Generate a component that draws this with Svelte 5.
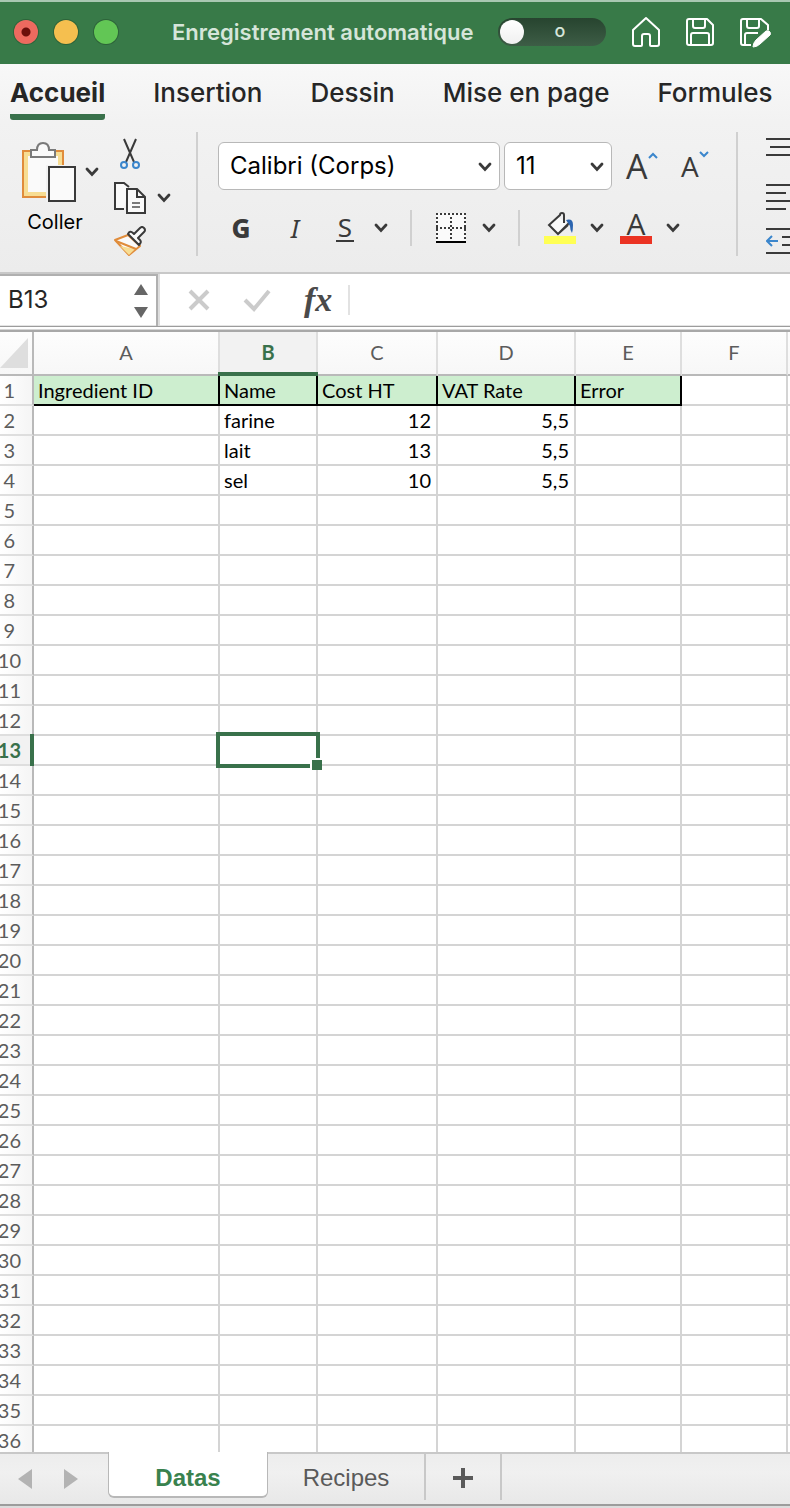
<script>
  const columns = [
    { name: 'A', width: 186 },
    { name: 'B', width: 98 },
    { name: 'C', width: 120 },
    { name: 'D', width: 138 },
    { name: 'E', width: 106 },
    { name: 'F', width: 106 },
    { name: '', width: null }
  ]

  const data = [
    ['Ingredient ID', 'Name', 'Cost HT', 'VAT Rate', 'Error'],
    ['', 'farine', '12', '5,5', ''],
    ['', 'lait', '13', '5,5', ''],
    ['', 'sel', '10', '5,5', '']
  ]

  const rows = Array.from({ length: 36 }, (_, i) => i + 1)
  const ribbonTabs = ['Accueil', 'Insertion', 'Dessin', 'Mise en page', 'Formules']
  const sheets = ['Datas', 'Recipes']

  let autosave = $state(false)
  let ribbonTab = $state('Accueil')
  let sheet = $state('Datas')
  let selRow = $state(13)
  let selCol = $state(1)
  let cellName = $derived(columns[selCol].name + selRow)

  function select(r, c) {
    if (!columns[c].name) return
    selRow = r
    selCol = c
  }

  function move(d) {
    selRow = Math.min(rows.length, Math.max(1, selRow + d))
  }

  function cell(r, c) {
    return data[r - 1]?.[c] ?? ''
  }
</script>

{#snippet chevron()}
  <svg class="chevron" width="14" height="10" viewBox="0 0 14 10" aria-hidden="true">
    <path d="M2 2l5 5.4L12 2" fill="none" stroke="currentColor" stroke-width="2.8" stroke-linecap="round" />
  </svg>
{/snippet}

<div class="window">
  <header class="titlebar">
    <div class="lights">
      <button class="light red" aria-label="Fermer"></button>
      <button class="light yellow" aria-label="Réduire"></button>
      <button class="light green" aria-label="Agrandir"></button>
    </div>
    <label class="autosave">
      <span>Enregistrement automatique</span>
      <span class="switch">
        <input type="checkbox" role="switch" bind:checked={autosave} />
        <span class="off">o</span>
      </span>
    </label>
    <div class="quick">
      <button aria-label="Accueil">
        <svg width="30" height="32" viewBox="0 0 30 32" fill="none" stroke="#fff" stroke-width="2" stroke-linejoin="round">
          <path d="M15 2L2 14v14q0 2 2 2h6q1 0 1-1v-9q0-2 2-2h4q2 0 2 2v9q0 1 1 1h6q2 0 2-2V14z" />
        </svg>
      </button>
      <button aria-label="Enregistrer">
        <svg width="30" height="32" viewBox="0 0 30 32" fill="none" stroke="#fff" stroke-width="2" stroke-linejoin="round">
          <path d="M4 3h18l6 6v18q0 2-2 2H4q-2 0-2-2V5q0-2 2-2z" />
          <path d="M8 3v7q0 2 2 2h8q2 0 2-2V3M6 29V19q0-2 2-2h14q2 0 2 2v10" />
        </svg>
      </button>
      <button aria-label="Enregistrer sous">
        <svg width="32" height="32" viewBox="0 0 32 32" fill="none" stroke="#fff" stroke-width="2" stroke-linejoin="round">
          <path d="M12 29H4q-2 0-2-2V5q0-2 2-2h18l7 6v5" />
          <path d="M8 3v7q0 2 2 2h8q2 0 2-2V3M6 29V19q0-2 2-2h11" />
          <path d="M14 31q0-4 3-7L27 15q3-1 4 1t0 3L21 28q-3 3-7 3z" fill="#fff" stroke-width="1" />
        </svg>
      </button>
    </div>
  </header>

  <nav class="tabs">
    {#each ribbonTabs as t}
      <button class:active={ribbonTab === t} onclick={() => (ribbonTab = t)}>{t}</button>
    {/each}
  </nav>

  <div class="ribbon">
    <section class="clipboard">
      <button class="paste">
        <span class="paste-icon">
          <svg width="54" height="60" viewBox="0 0 54 60">
            <path d="M1 9h40v46H1z" fill="#f7dd93" stroke="#e08c3b" stroke-width="2" />
            <path d="M6 14h30v36H6z" fill="#fafafa" />
            <path d="M24 23h30v37H24z" fill="#f2f2f2" />
            <path d="M9 15V8h6q0-7 6-7t6 7h6v7z" fill="#fafafa" stroke="#7a7a7a" stroke-width="2" />
            <path d="M27 25h26v34H27z" fill="#fafafa" stroke="#3a3a3a" stroke-width="2" />
          </svg>
          {@render chevron()}
        </span>
        <span>Coller</span>
      </button>
      <div class="tools">
        <button aria-label="Couper">
          <svg width="32" height="32" viewBox="0 0 32 32" fill="none">
            <path d="M10 1l10 23M22 1L12 24" stroke="#3a3a3a" stroke-width="2" />
            <circle cx="10" cy="27" r="3" stroke="#3b86cc" stroke-width="2" />
            <circle cx="22" cy="27" r="3" stroke="#3b86cc" stroke-width="2" />
          </svg>
        </button>
        <button aria-label="Copier">
          <svg width="32" height="32" viewBox="0 0 32 32" fill="none" stroke="#3a3a3a" stroke-width="2">
            <path d="M10 27H1V1h9l5 4" fill="#fafafa" />
            <path d="M13 7h10l8 8v16H13z" fill="#fafafa" />
            <path d="M23 7v8h8" />
            <path d="M18 21h8M18 25h8" stroke="#7a7a7a" />
          </svg>
          {@render chevron()}
        </button>
        <button aria-label="Reproduire la mise en forme">
          <svg width="32" height="32" viewBox="0 0 32 32" stroke-width="2" stroke-linejoin="round">
            <path d="M1 14l13-5 12 11-11 9z" fill="#fafafa" stroke="#e08c3b" />
            <path d="M6 20l15 3-6 6z" fill="#f7dd93" />
            <path d="M2 15l20 8" stroke="#e08c3b" />
            <path d="M14 8q2-4 5-1l1 1 6-6q2-2 4 0t0 4l-6 6 2 2q2 2-1 5z" fill="#fafafa" stroke="#3a3a3a" />
          </svg>
        </button>
      </div>
    </section>

    <section class="font">
      <div class="line">
        <span class="select family">
          <select aria-label="Police"><option>Calibri (Corps)</option></select>
          {@render chevron()}
        </span>
        <span class="select size">
          <select aria-label="Taille"><option>11</option></select>
          {@render chevron()}
        </span>
        <button class="grow" aria-label="Augmenter la taille">
          <span>A</span>
          <svg width="10" height="8" viewBox="0 0 10 8"><path d="M1 6l4-4 4 4" fill="none" stroke="#3b86cc" stroke-width="2" /></svg>
        </button>
        <button class="grow shrink" aria-label="Réduire la taille">
          <span>A</span>
          <svg width="10" height="8" viewBox="0 0 10 8"><path d="M1 2l4 4 4-4" fill="none" stroke="#3b86cc" stroke-width="2" /></svg>
        </button>
      </div>
      <div class="line styles">
        <button class="bold">G</button>
        <button class="italic">I</button>
        <button class="with-menu"><span class="under">S</span>{@render chevron()}</button>
        <span class="sep"></span>
        <button class="with-menu" aria-label="Bordures">
          <svg width="30" height="30" viewBox="0 0 30 30" fill="none" stroke="#3a3a3a" stroke-width="2">
            <path d="M0 0h30v28H0z" fill="#fafafa" stroke="none" />
            <path d="M0 1h30M0 15h30M1 4v24M15 4v24M29 4v24" stroke-dasharray="2 2" />
            <path d="M0 29h30" stroke="#000" />
          </svg>
          {@render chevron()}
        </button>
        <span class="sep"></span>
        <button class="with-menu" aria-label="Couleur de remplissage">
          <svg width="32" height="32" viewBox="0 0 32 32" fill="none">
            <path d="M14 5l11 8-11 9-9-9L15 4z" fill="#fafafa" />
            <path d="M20 11V3q0-2-2-2-2 0-2 2L5 13l9 9 11-11M14 22l10-9" stroke="#3a3a3a" stroke-width="2" />
            <path d="M22 8q7-2 7 5 0 5-1 8-2-3-2-7z" fill="#2b65b0" />
            <path d="M0 24h32v8H0z" fill="#ffff54" />
          </svg>
          {@render chevron()}
        </button>
        <button class="with-menu" aria-label="Couleur de police">
          <span class="ink">A</span>
          {@render chevron()}
        </button>
      </div>
    </section>

    <section class="align">
      <button aria-label="Aligner en haut">
        <svg width="36" height="18" viewBox="0 0 36 18" stroke="#3a3a3a" stroke-width="2"><path d="M0 1h36M4 9h28M0 17h36" /></svg>
      </button>
      <button aria-label="Aligner à gauche">
        <svg width="36" height="26" viewBox="0 0 36 26" stroke="#3a3a3a" stroke-width="2"><path d="M0 1h36M0 9h20M0 17h36M0 25h20" /></svg>
      </button>
      <button aria-label="Diminuer le retrait">
        <svg width="36" height="26" viewBox="0 0 36 26" fill="none" stroke="#3a3a3a" stroke-width="2">
          <path d="M0 1h36M16 9h20M16 17h20M0 25h36" />
          <path d="M12 13H1M6 8l-5 5 5 5" stroke="#3b86cc" />
        </svg>
      </button>
    </section>
  </div>

  <div class="formula">
    <div class="namebox">
      <input aria-label="Zone Nom" value={cellName} />
      <span class="spin">
        <button aria-label="Monter" onclick={() => move(-1)}>
          <svg width="14" height="11" viewBox="0 0 14 11"><path d="M7 0l7 11H0z" fill="#666" /></svg>
        </button>
        <button aria-label="Descendre" onclick={() => move(1)}>
          <svg width="14" height="11" viewBox="0 0 14 11"><path d="M0 0h14L7 11z" fill="#666" /></svg>
        </button>
      </span>
    </div>
    <button aria-label="Annuler">
      <svg width="24" height="24" viewBox="0 0 24 24"><path d="M3 3l18 18M21 3L3 21" stroke="#cbcbcb" stroke-width="4" /></svg>
    </button>
    <button aria-label="Valider">
      <svg width="28" height="24" viewBox="0 0 28 24"><path d="M2 12l9 9L26 3" fill="none" stroke="#cbcbcb" stroke-width="4" /></svg>
    </button>
    <button class="fx">fx</button>
    <input class="entry" aria-label="Barre de formule" value={cell(selRow, selCol)} />
  </div>

  <main class="sheet">
    <table>
      <colgroup>
        <col style:width="34px" />
        {#each columns as col}
          <col style:width={col.width ? `${col.width}px` : null} />
        {/each}
      </colgroup>
      <thead>
        <tr>
          <td class="corner"><svg width="28" height="30" viewBox="0 0 28 30"><path d="M28 0v30H0z" fill="#dedede" /></svg></td>
          {#each columns as col, c}
            <th scope="col" class:current={c === selCol}>{col.name}</th>
          {/each}
        </tr>
      </thead>
      <tbody>
        {#each rows as r}
          <tr class:titles={r === 1}>
            <th scope="row" class:current={r === selRow}><span>{r}</span></th>
            {#each columns as col, c}
              <td class:number={r > 1 && (c === 2 || c === 3)} class:filled={r === 1 && c < 5} onclick={() => select(r, c)}>
                {cell(r, c)}
                {#if r === selRow && c === selCol}
                  <div class="cursor"><i></i></div>
                {/if}
              </td>
            {/each}
          </tr>
        {/each}
      </tbody>
    </table>
  </main>

  <footer>
    <div class="arrows">
      <button aria-label="Feuille précédente">
        <svg width="14" height="20" viewBox="0 0 14 20"><path d="M14 0v20L0 10z" fill="#b3b3b3" /></svg>
      </button>
      <button aria-label="Feuille suivante">
        <svg width="14" height="20" viewBox="0 0 14 20"><path d="M0 0v20l14-10z" fill="#b3b3b3" /></svg>
      </button>
    </div>
    {#each sheets as s}
      <button class="sheet-tab" class:open={sheet === s} onclick={() => (sheet = s)}>{s}</button>
    {/each}
    <button class="add" aria-label="Nouvelle feuille">
      <svg width="20" height="20" viewBox="0 0 20 20"><path d="M10 0v20M0 10h20" stroke="#5a5a5a" stroke-width="4" /></svg>
    </button>
  </footer>
</div>

<style>
  :global(body) {
    margin: 0;
    background: #d9c9d6;
  }
  .window {
    display: flex;
    flex-direction: column;
    height: 100vh;
    overflow: hidden;
    box-sizing: border-box;
    font-family: Inter, "Liberation Sans", sans-serif;
    color: #262626;
    background: #fff;
  }
  .window :is(button, input, select) {
    font: inherit;
    color: inherit;
    border: 0;
    padding: 0;
    margin: 0;
    background: none;
  }
  svg {
    display: block;
    flex-shrink: 0;
  }
  section,
  .line,
  .quick,
  .lights {
    display: flex;
  }

  .titlebar {
    display: flex;
    align-items: center;
    flex-shrink: 0;
    box-sizing: border-box;
    height: 64px;
    padding: 0 0 2px 14px;
    border-top: 2px solid #a9c8b2;
    background: #387a48;
  }
  .lights {
    gap: 16px;
    width: 158px;
  }
  .window .light {
    width: 24px;
    height: 24px;
    border-radius: 50%;
    box-shadow: 0 0 0 1px #2d6339;
  }
  .window .red {
    background: radial-gradient(circle, #6b0f0b 4px, #ed6a5f 5px);
  }
  .window .yellow {
    background: #f5bf4f;
  }
  .window .green {
    background: #62c655;
  }
  .autosave {
    display: flex;
    align-items: center;
    gap: 25px;
    font-size: 22px;
    font-weight: 600;
    white-space: nowrap;
    color: #d5e5d9;
  }
  .switch {
    position: relative;
    display: flex;
  }
  .window .switch input {
    appearance: none;
    width: 108px;
    height: 28px;
    border-radius: 14px;
    background: linear-gradient(#27442f, #3d5d46);
  }
  .switch input::before {
    content: '';
    display: block;
    width: 24px;
    height: 24px;
    margin: 2px;
    border-radius: 50%;
    background: linear-gradient(#fff, #f0f0f0);
  }
  .switch input:checked::before {
    margin-left: 82px;
  }
  .off {
    position: absolute;
    left: 56px;
    font-size: 18px;
    line-height: 26px;
    font-weight: 500;
  }
  .quick {
    gap: 24px;
    margin-left: 25px;
  }

  .tabs {
    display: flex;
    flex-shrink: 0;
    gap: 48px;
    height: 58px;
    padding-left: 10px;
    background: linear-gradient(#f8f8f8, #f2f2f2);
  }
  .window .tabs button {
    align-self: flex-start;
    height: 56px;
    font-size: 26px;
    font-weight: 500;
    white-space: nowrap;
  }
  .window .tabs .active {
    font-weight: 700;
    background: linear-gradient(#39714b, #39714b) bottom / 100% 6px no-repeat;
    border-radius: 0 0 3px 3px;
  }

  .ribbon {
    display: flex;
    flex-shrink: 0;
    height: 150px;
    overflow: hidden;
    border-bottom: 2px solid #c8c8c8;
    background: linear-gradient(#f2f2f2, #ececec);
  }
  .ribbon section {
    flex-shrink: 0;
  }
  .clipboard,
  .font {
    margin: 10px 0 16px;
    border-right: 2px solid #d0d0d0;
  }
  .clipboard {
    gap: 15px;
    width: 174px;
    padding-left: 22px;
  }
  .chevron {
    color: #3a3a3a;
  }
  .window .paste {
    display: flex;
    flex-direction: column;
    gap: 8px;
    width: 77px;
    padding-top: 10px;
    font-size: 20px;
    line-height: 24px;
    color: #000;
  }
  .paste-icon {
    display: flex;
    align-items: center;
    gap: 9px;
  }
  .paste > span:last-child {
    width: 66px;
    text-align: center;
  }
  .tools {
    display: flex;
    flex-direction: column;
    gap: 12px;
    padding-top: 6px;
  }
  .tools button {
    display: flex;
    align-items: center;
    gap: 11px;
  }
  .font {
    flex-direction: column;
    gap: 20px;
    width: 518px;
    padding-left: 20px;
  }
  .line {
    align-items: center;
  }
  .font .line:first-child {
    padding-top: 10px;
  }
  .select {
    position: relative;
    margin-right: 4px;
  }
  .select .chevron {
    position: absolute;
    right: 8px;
    top: 20px;
    pointer-events: none;
  }
  .window select {
    appearance: none;
    display: block;
    box-sizing: border-box;
    width: 100%;
    height: 48px;
    padding: 0 0 2px 11px;
    border: 1px solid #b8b8b8;
    border-radius: 6px;
    background: #fff;
    font-size: 24px;
    color: #000;
  }
  .family {
    width: 282px;
  }
  .size {
    width: 108px;
  }
  .window .grow {
    display: flex;
    align-items: flex-start;
    width: 55px;
    padding-left: 10px;
    color: #3a3a3a;
  }
  .grow span {
    font-family: "Open Sans", sans-serif;
    font-size: 34px;
    line-height: 40px;
  }
  .grow svg {
    margin-top: 6px;
  }
  .grow.shrink span {
    font-size: 28px;
    line-height: 44px;
  }
  .styles {
    height: 36px;
    color: #3a3a3a;
    font-family: "Noto Sans", sans-serif;
    font-size: 26px;
    line-height: 32px;
  }
  .styles button {
    line-height: 32px;
  }
  .window .bold {
    width: 20px;
    margin-left: 13px;
    font-weight: 800;
  }
  .window .italic {
    width: 20px;
    margin: 0 31px 0 34px;
    font-style: italic;
    font-weight: 400;
  }
  .with-menu {
    display: flex;
    align-items: center;
    justify-content: space-between;
    width: 60px;
  }
  .window .with-menu + .with-menu {
    margin-left: 16px;
  }
  .under {
    width: 18px;
    border-bottom: 2px solid #3a3a3a;
    line-height: 26px;
  }
  .italic + .with-menu {
    width: 52px;
  }
  .sep {
    width: 2px;
    height: 36px;
    margin: 0 24px 0 22px;
    background: #d0d0d0;
  }
  .ink {
    width: 32px;
    border-bottom: 8px solid #eb3323;
    font-family: "Open Sans", sans-serif;
    font-size: 30px;
    line-height: 24px;
  }
  .align {
    flex-direction: column;
    gap: 28px;
    padding: 16px 0 0 28px;
  }
  .align button:last-child {
    margin-top: -10px;
  }

  .formula {
    display: flex;
    align-items: center;
    flex-shrink: 0;
    height: 52px;
    border-bottom: 1px solid #9c9c9c;
    box-shadow: inset 0 -1px #e4e4e4;
  }
  .namebox {
    display: flex;
    align-items: center;
    align-self: stretch;
    width: 156px;
    border-top: 2px solid #b0b0b0;
    border-right: 2px solid #b0b0b0;
    margin-right: 29px;
    box-shadow: 2px 0 #dedede;
  }
  .window .namebox input {
    flex: 1;
    min-width: 0;
    padding: 0 0 4px 8px;
    font-size: 24px;
  }
  .spin {
    display: flex;
    flex-direction: column;
    gap: 12px;
    margin-right: 8px;
  }
  .formula > button {
    margin-right: 32px;
  }
  .window .formula .fx {
    margin: 0 16px 0 1px;
    font: italic 700 34px "Liberation Serif", serif;
    color: #4a4a4a;
  }
  .window .entry {
    flex: 1;
    min-width: 0;
    height: 30px;
    border-left: 2px solid #e2e2e2;
    padding-left: 14px;
    font-size: 22px;
  }

  .sheet {
    flex: 1;
    min-height: 0;
    overflow: hidden;
    margin-top: 3px;
    border-top: 2px solid #a8a8a8;
    box-shadow: 0 -1px #d5d5d5;
    font-family: Lato, sans-serif;
    font-size: 20px;
    line-height: 28px;
  }
  table {
    width: 100%;
    table-layout: fixed;
    border-collapse: separate;
    border-spacing: 0;
  }
  th,
  td {
    position: relative;
    box-sizing: border-box;
    height: 30px;
    padding: 0 4px;
    border-right: 2px solid #d4d4d4;
    border-bottom: 2px solid #d4d4d4;
    white-space: nowrap;
    color: #000;
  }
  tr > :last-child {
    border-right: 0;
  }
  thead th,
  .corner {
    height: 44px;
    border-bottom-color: #b9b9b9;
    background: linear-gradient(#fdfdfd, #f7f7f7);
    font-weight: 400;
    color: #5c5c5c;
  }
  thead th {
    border-right-color: #dedede;
    padding-bottom: 2px;
  }
  .corner {
    padding: 0;
    border-right-color: #b9b9b9;
  }
  tbody th {
    padding: 0;
    border-right-color: #b9b9b9;
    border-bottom-color: #dedede;
    background: linear-gradient(90deg, #fff, #f5f5f5);
    font-weight: 400;
    color: #5c5c5c;
  }
  tbody th span {
    display: flex;
    justify-content: flex-end;
    width: 21px;
  }
  tbody tr:nth-child(-n + 9) th span {
    width: 15px;
  }
  th.current {
    background: #f2f2f2;
    color: #39714b;
    font-weight: 700;
  }
  th.current::after {
    content: '';
    position: absolute;
    z-index: 1;
    background: #39714b;
  }
  thead th.current::after {
    left: -2px;
    right: -2px;
    bottom: -2px;
    height: 4px;
  }
  tbody th.current::after {
    top: -2px;
    right: -2px;
    bottom: -2px;
    width: 4px;
  }
  .number {
    padding-right: 5px;
    text-align: right;
    font-kerning: none;
  }
  .titles .filled {
    border-color: #000;
    background: #cdeecf;
  }
  .cursor {
    position: absolute;
    z-index: 1;
    inset: -4px;
    border: 4px solid #39714b;
  }
  .cursor i {
    position: absolute;
    right: -6px;
    bottom: -6px;
    width: 10px;
    height: 10px;
    border: solid #fff;
    border-width: 2px 0 0 2px;
    background: #39714b;
  }

  footer {
    display: flex;
    flex-shrink: 0;
    box-sizing: border-box;
    height: 56px;
    padding-bottom: 8px;
    background: linear-gradient(#c8c8c8 2px, #ededed 2px, #f0f0f0 20px, #e8e8e8 52px, #9c9c9c 52px, #9c9c9c 54px, #dcdcdc 54px);
    font-family: "Liberation Sans", sans-serif;
    font-size: 24px;
    color: #5a5a5a;
  }
  .arrows {
    display: flex;
    align-items: center;
    gap: 32px;
    width: 90px;
    padding: 6px 0 0 18px;
  }
  .window .sheet-tab {
    width: 158px;
    border-right: 2px solid #c8c8c8;
    padding-top: 4px;
  }
  .window .sheet-tab.open {
    width: 160px;
    box-sizing: border-box;
    height: 46px;
    padding-top: 8px;
    border: solid #b8b8b8;
    border-width: 0 1px 2px;
    border-radius: 0 0 6px 6px;
    background: #fff;
    color: #39824e;
    font-weight: 700;
  }
  .window .add {
    display: flex;
    align-items: center;
    justify-content: center;
    width: 76px;
    padding-top: 4px;
    border-right: 2px solid #c8c8c8;
  }
</style>
